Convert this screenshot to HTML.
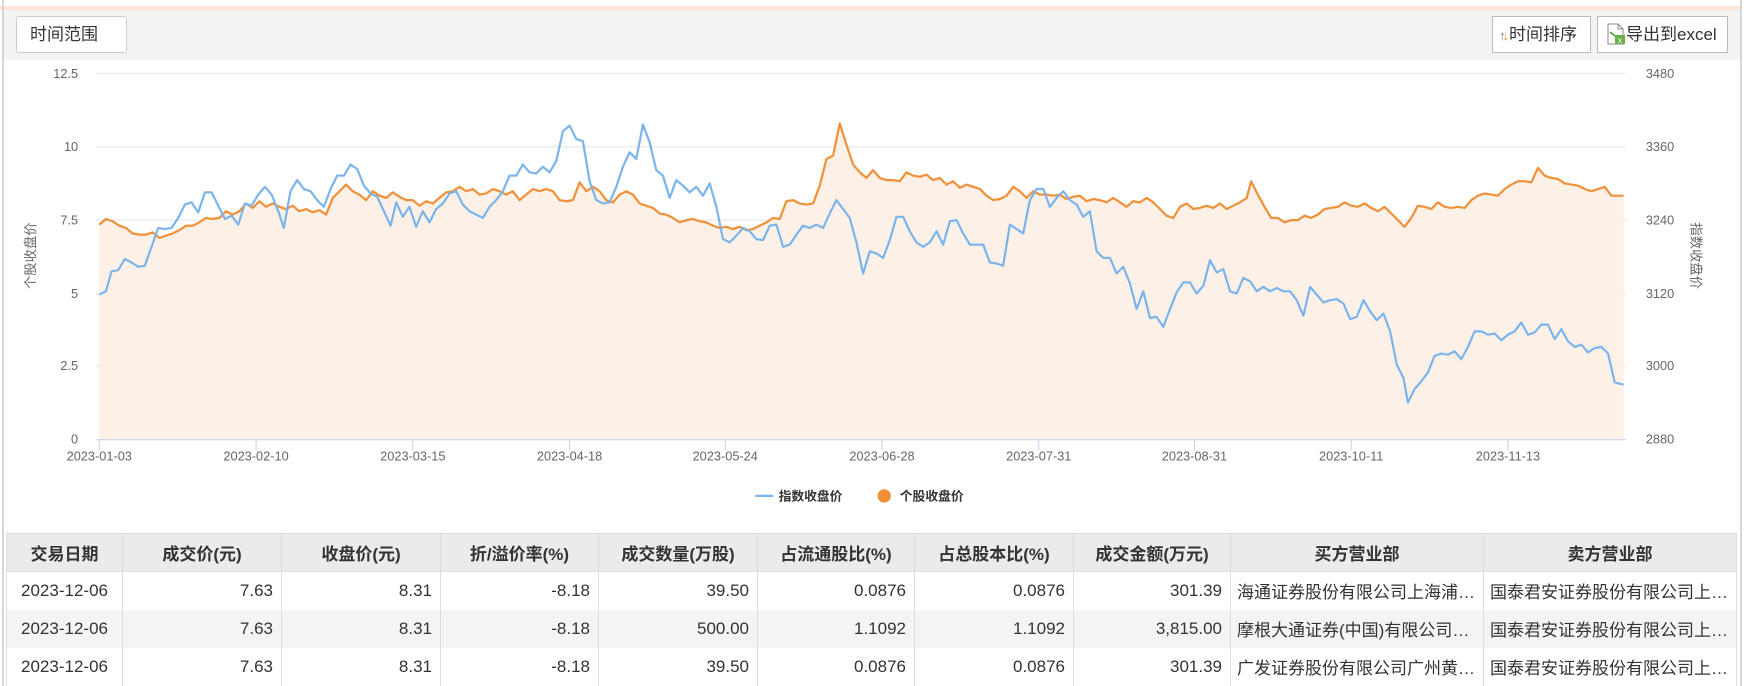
<!DOCTYPE html>
<html><head><meta charset="utf-8"><style>
*{margin:0;padding:0;box-sizing:border-box}
body{width:1744px;height:686px;background:#fff;position:relative;overflow:hidden;font-family:"Liberation Sans","Noto Sans CJK SC",sans-serif;color:#333}
.abs{position:absolute}
.btn{position:absolute;top:16px;height:37px;background:#fff;border:1px solid #bbb;font-size:17px;line-height:35px;color:#333}
table{position:absolute;left:6px;top:533px;border-collapse:collapse;font-size:17px;table-layout:fixed}
td,th{height:38px;border-left:1px solid #ddd;border-right:1px solid #ddd;padding:0 8px;white-space:nowrap;overflow:hidden}
th{background:#ebebeb;font-weight:bold;text-align:center;color:#333;border-top:1px solid #ddd;border-bottom:1px solid #ddd;font-size:17px}
td{text-align:right;color:#333}
td.c{text-align:center}td.l{text-align:left;padding-left:6px}
tr.g td{background:#f4f4f4}
</style></head><body>
<div class="abs" style="left:0;top:0;width:1744px;height:6px;background:#fff"></div>
<div class="abs" style="left:0;top:6px;width:1740px;height:4px;background:#fbe4d4"></div>
<div class="abs" style="left:2px;top:0;width:2px;height:686px;background:#d6d6d6"></div>
<div class="abs" style="left:1740px;top:0;width:2px;height:686px;background:#d6d6d6"></div>
<div class="abs" style="left:4px;top:10px;width:1736px;height:50px;background:#f3f3f3"></div>
<div class="btn" style="left:16px;width:111px;border-color:#ccc;border-radius:3px;padding-left:13px">时间范围</div>
<div class="btn" style="left:1492px;width:99px;padding-left:6px"><span style="font-size:13px;color:#777">↑</span><span style="font-size:13px;color:#f0913a;margin-left:-3px">↓</span>时间排序</div>
<div class="btn" style="left:1597px;width:131px;padding-left:8px">
<svg width="20" height="22" viewBox="0 0 20 22" style="vertical-align:-5px"><path d="M2 1h10l5 5v15H2z" fill="#fff" stroke="#888"/><path d="M12 1v5h5" fill="none" stroke="#888"/><path d="M4 9l5 4" stroke="#4a9a3a" stroke-width="1.5"/><rect x="9" y="12" width="10" height="9" fill="#6ab04c"/><text x="14" y="20" font-size="8" fill="#fff" text-anchor="middle" font-family="Liberation Sans">x</text></svg>导出到excel</div>

<svg class="abs" style="left:0;top:0" width="1744" height="686" viewBox="0 0 1568 617">
<g stroke="#e6e6e6" stroke-width="1">
<line x1="86" y1="66" x2="1462" y2="66"/><line x1="86" y1="132" x2="1462" y2="132"/><line x1="86" y1="198" x2="1462" y2="198"/><line x1="86" y1="264" x2="1462" y2="264"/><line x1="86" y1="329" x2="1462" y2="329"/>
</g>
<g font-family="Liberation Sans" font-size="11.5" fill="#666" text-anchor="end">
<text x="70" y="70">12.5</text><text x="70" y="136">10</text><text x="70" y="202">7.5</text><text x="70" y="268">5</text><text x="70" y="333">2.5</text><text x="70" y="399">0</text>
</g>
<g font-family="Liberation Sans" font-size="11.5" fill="#666">
<text x="1480" y="70">3480</text><text x="1480" y="136">3360</text><text x="1480" y="202">3240</text><text x="1480" y="268">3120</text><text x="1480" y="333">3000</text><text x="1480" y="399">2880</text>
</g>
<text transform="translate(31,230) rotate(-90)" font-family="Liberation Sans,Noto Sans CJK SC" font-size="12" fill="#666" text-anchor="middle">个股收盘价</text>
<text transform="translate(1521,230) rotate(90)" font-family="Liberation Sans,Noto Sans CJK SC" font-size="12" fill="#666" text-anchor="middle">指数收盘价</text>
<polygon id="area" fill="#fdf0e6" points=""/>
<polyline id="org" fill="none" stroke="#f0913a" stroke-width="2" stroke-linejoin="round" points=""/>
<polyline id="blu" fill="none" stroke="#7cb5ec" stroke-width="2" stroke-linejoin="round" points=""/>
<line x1="86" y1="395.5" x2="1462" y2="395.5" stroke="#ccd6eb"/>
<g stroke="#ccd6eb"><line x1="89" y1="395" x2="89" y2="405"/><line x1="230" y1="395" x2="230" y2="405"/><line x1="371" y1="395" x2="371" y2="405"/><line x1="512" y1="395" x2="512" y2="405"/><line x1="652" y1="395" x2="652" y2="405"/><line x1="793" y1="395" x2="793" y2="405"/><line x1="934" y1="395" x2="934" y2="405"/><line x1="1074" y1="395" x2="1074" y2="405"/><line x1="1215" y1="395" x2="1215" y2="405"/><line x1="1356" y1="395" x2="1356" y2="405"/></g>
<g font-family="Liberation Sans" font-size="11.5" fill="#666" text-anchor="middle">
<text x="89" y="414">2023-01-03</text><text x="230" y="414">2023-02-10</text><text x="371" y="414">2023-03-15</text><text x="512" y="414">2023-04-18</text><text x="652" y="414">2023-05-24</text><text x="793" y="414">2023-06-28</text><text x="934" y="414">2023-07-31</text><text x="1074" y="414">2023-08-31</text><text x="1215" y="414">2023-10-11</text><text x="1356" y="414">2023-11-13</text>
</g>
<line x1="679" y1="446" x2="695" y2="446" stroke="#7cb5ec" stroke-width="2"/>
<text x="700" y="450" font-family="Liberation Sans,Noto Sans CJK SC" font-size="11.5" font-weight="bold" fill="#333">指数收盘价</text>
<circle cx="795" cy="446" r="6" fill="#f0913a"/>
<text x="809" y="450" font-family="Liberation Sans,Noto Sans CJK SC" font-size="11.5" font-weight="bold" fill="#333">个股收盘价</text>
</svg>
<script>
var B="89,265 95,262 100,244 106,243 112,233 118,236 124,240 130,239 136,222 142,205 148,206 154,205 160,196 166,184 172,182 178,191 184,173 190,173 196,185 202,197 208,194 214,202 220,183 226,185 232,175 238,168 244,175 250,190 255,205 261,172 267,162 273,170 279,172 285,180 291,186 297,170 303,158 309,158 315,148 321,152 327,167 333,174 339,177 345,190 351,203 356,182 362,195 368,186 374,204 380,190 386,200 392,188 398,183 404,174 410,172 416,184 422,190 428,193 434,196 440,186 446,180 452,172 458,158 464,158 470,148 476,155 482,156 488,150 494,155 500,145 506,118 512,113 518,125 524,127 530,163 536,180 542,183 548,182 554,168 560,150 566,137 572,143 578,112 584,128 590,153 596,158 602,178 608,162 614,167 620,173 626,168 632,176 638,165 644,186 650,215 656,218 662,212 668,205 674,208 680,215 686,216 692,203 698,202 704,222 710,220 716,211 722,203 728,205 734,202 740,205 746,192 752,180 758,188 764,196 770,218 776,246 782,226 788,228 794,232 800,216 806,195 812,195 818,208 824,218 830,222 836,218 842,208 848,220 854,199 860,198 866,210 872,220 878,220 884,220 890,236 896,237 902,239 908,202 914,206 920,210 926,180 932,170 938,170 944,186 950,178 956,172 962,180 968,184 974,195 980,190 986,226 992,232 998,232 1004,246 1010,240 1016,255 1022,278 1028,262 1034,286 1040,285 1046,294 1052,278 1058,263 1064,254 1070,254 1076,264 1082,257 1088,234 1094,245 1100,242 1106,262 1112,264 1118,250 1124,253 1130,262 1136,258 1142,262 1148,259 1154,262 1160,262 1166,270 1172,284 1178,258 1184,265 1190,272 1196,270 1202,269 1208,273 1214,287 1220,285 1226,270 1232,280 1238,288 1244,282 1250,298 1256,328 1262,340 1266,362 1272,350 1278,343 1284,335 1290,320 1296,318 1302,319 1308,316 1314,323 1320,312 1326,298 1332,298 1338,301 1344,300 1350,306 1356,301 1362,298 1368,290 1374,301 1380,299 1386,292 1392,292 1398,305 1404,296 1410,307 1416,312 1422,310 1428,317 1434,313 1440,312 1446,318 1452,344 1460,346";
var O="89,202 95,197 101,199 107,203 113,205 119,210 125,211 131,211 137,209 143,214 149,212 155,210 161,207 167,203 173,203 179,200 185,196 191,197 197,196 203,190 209,193 215,190 221,183 227,187 233,181 239,186 245,183 251,186 257,188 263,185 269,190 275,188 281,191 287,189 293,193 299,178 305,172 311,166 317,172 323,175 329,180 335,172 341,176 347,178 353,173 359,177 365,180 371,180 377,185 383,181 389,183 395,178 401,173 407,172 413,168 419,172 425,170 431,175 437,174 443,170 449,172 455,175 461,172 467,180 473,175 479,170 485,172 491,170 497,172 503,180 509,181 515,180 521,164 527,172 533,168 539,172 545,180 551,182 557,175 563,172 569,175 575,183 581,185 587,187 593,192 599,193 605,196 611,200 617,198 623,197 629,199 635,200 641,203 647,205 653,204 659,206 665,204 671,207 677,206 683,203 689,200 695,196 701,197 707,181 713,180 719,183 725,184 731,183 737,167 743,143 749,140 755,111 761,130 767,148 773,155 779,160 785,153 791,160 797,162 803,162 809,163 815,155 821,158 827,159 833,157 839,162 845,160 851,166 857,163 863,169 869,166 875,168 881,170 887,176 893,180 899,179 905,176 911,168 917,172 923,178 929,172 935,175 941,175 947,176 953,175 959,179 965,177 971,176 977,181 983,179 989,180 995,182 1001,178 1007,182 1013,186 1019,181 1025,182 1031,178 1037,182 1043,188 1049,194 1055,196 1061,186 1067,183 1073,188 1079,187 1085,185 1091,187 1097,183 1103,188 1109,185 1115,182 1121,178 1125,163 1131,175 1137,186 1143,196 1149,196 1155,200 1161,198 1167,198 1173,194 1179,196 1185,193 1191,188 1197,187 1203,186 1209,182 1215,185 1221,186 1227,183 1233,187 1239,190 1245,186 1251,192 1257,198 1263,204 1269,196 1275,185 1281,186 1287,188 1293,182 1299,186 1305,187 1311,186 1317,187 1323,180 1329,176 1335,174 1341,175 1347,176 1353,170 1359,166 1365,163 1371,163 1377,164 1383,151 1389,158 1395,160 1401,161 1407,165 1413,166 1419,167 1425,170 1431,172 1437,170 1443,168 1449,176 1455,176 1460,176";
document.getElementById('blu').setAttribute('points',B);
document.getElementById('org').setAttribute('points',O);
document.getElementById('area').setAttribute('points',"89,395 "+O+" 1460,395");
</script>

<table>
<colgroup><col style="width:116px"><col style="width:159px"><col style="width:159px"><col style="width:158px"><col style="width:159px"><col style="width:157px"><col style="width:159px"><col style="width:157px"><col style="width:249px"><col style="width:253px"></colgroup>
<tr><th>交易日期</th><th>成交价(元)</th><th>收盘价(元)</th><th>折/溢价率(%)</th><th>成交数量(万股)</th><th>占流通股比(%)</th><th>占总股本比(%)</th><th>成交金额(万元)</th><th>买方营业部</th><th>卖方营业部</th></tr>
<tr><td class="c">2023-12-06</td><td>7.63</td><td>8.31</td><td>-8.18</td><td>39.50</td><td>0.0876</td><td>0.0876</td><td>301.39</td><td class="l">海通证券股份有限公司上海浦…</td><td class="l">国泰君安证券股份有限公司上…</td></tr>
<tr class="g"><td class="c">2023-12-06</td><td>7.63</td><td>8.31</td><td>-8.18</td><td>500.00</td><td>1.1092</td><td>1.1092</td><td>3,815.00</td><td class="l">摩根大通证券(中国)有限公司…</td><td class="l">国泰君安证券股份有限公司上…</td></tr>
<tr><td class="c">2023-12-06</td><td>7.63</td><td>8.31</td><td>-8.18</td><td>39.50</td><td>0.0876</td><td>0.0876</td><td>301.39</td><td class="l">广发证券股份有限公司广州黄…</td><td class="l">国泰君安证券股份有限公司上…</td></tr>
</table>
</body></html>
